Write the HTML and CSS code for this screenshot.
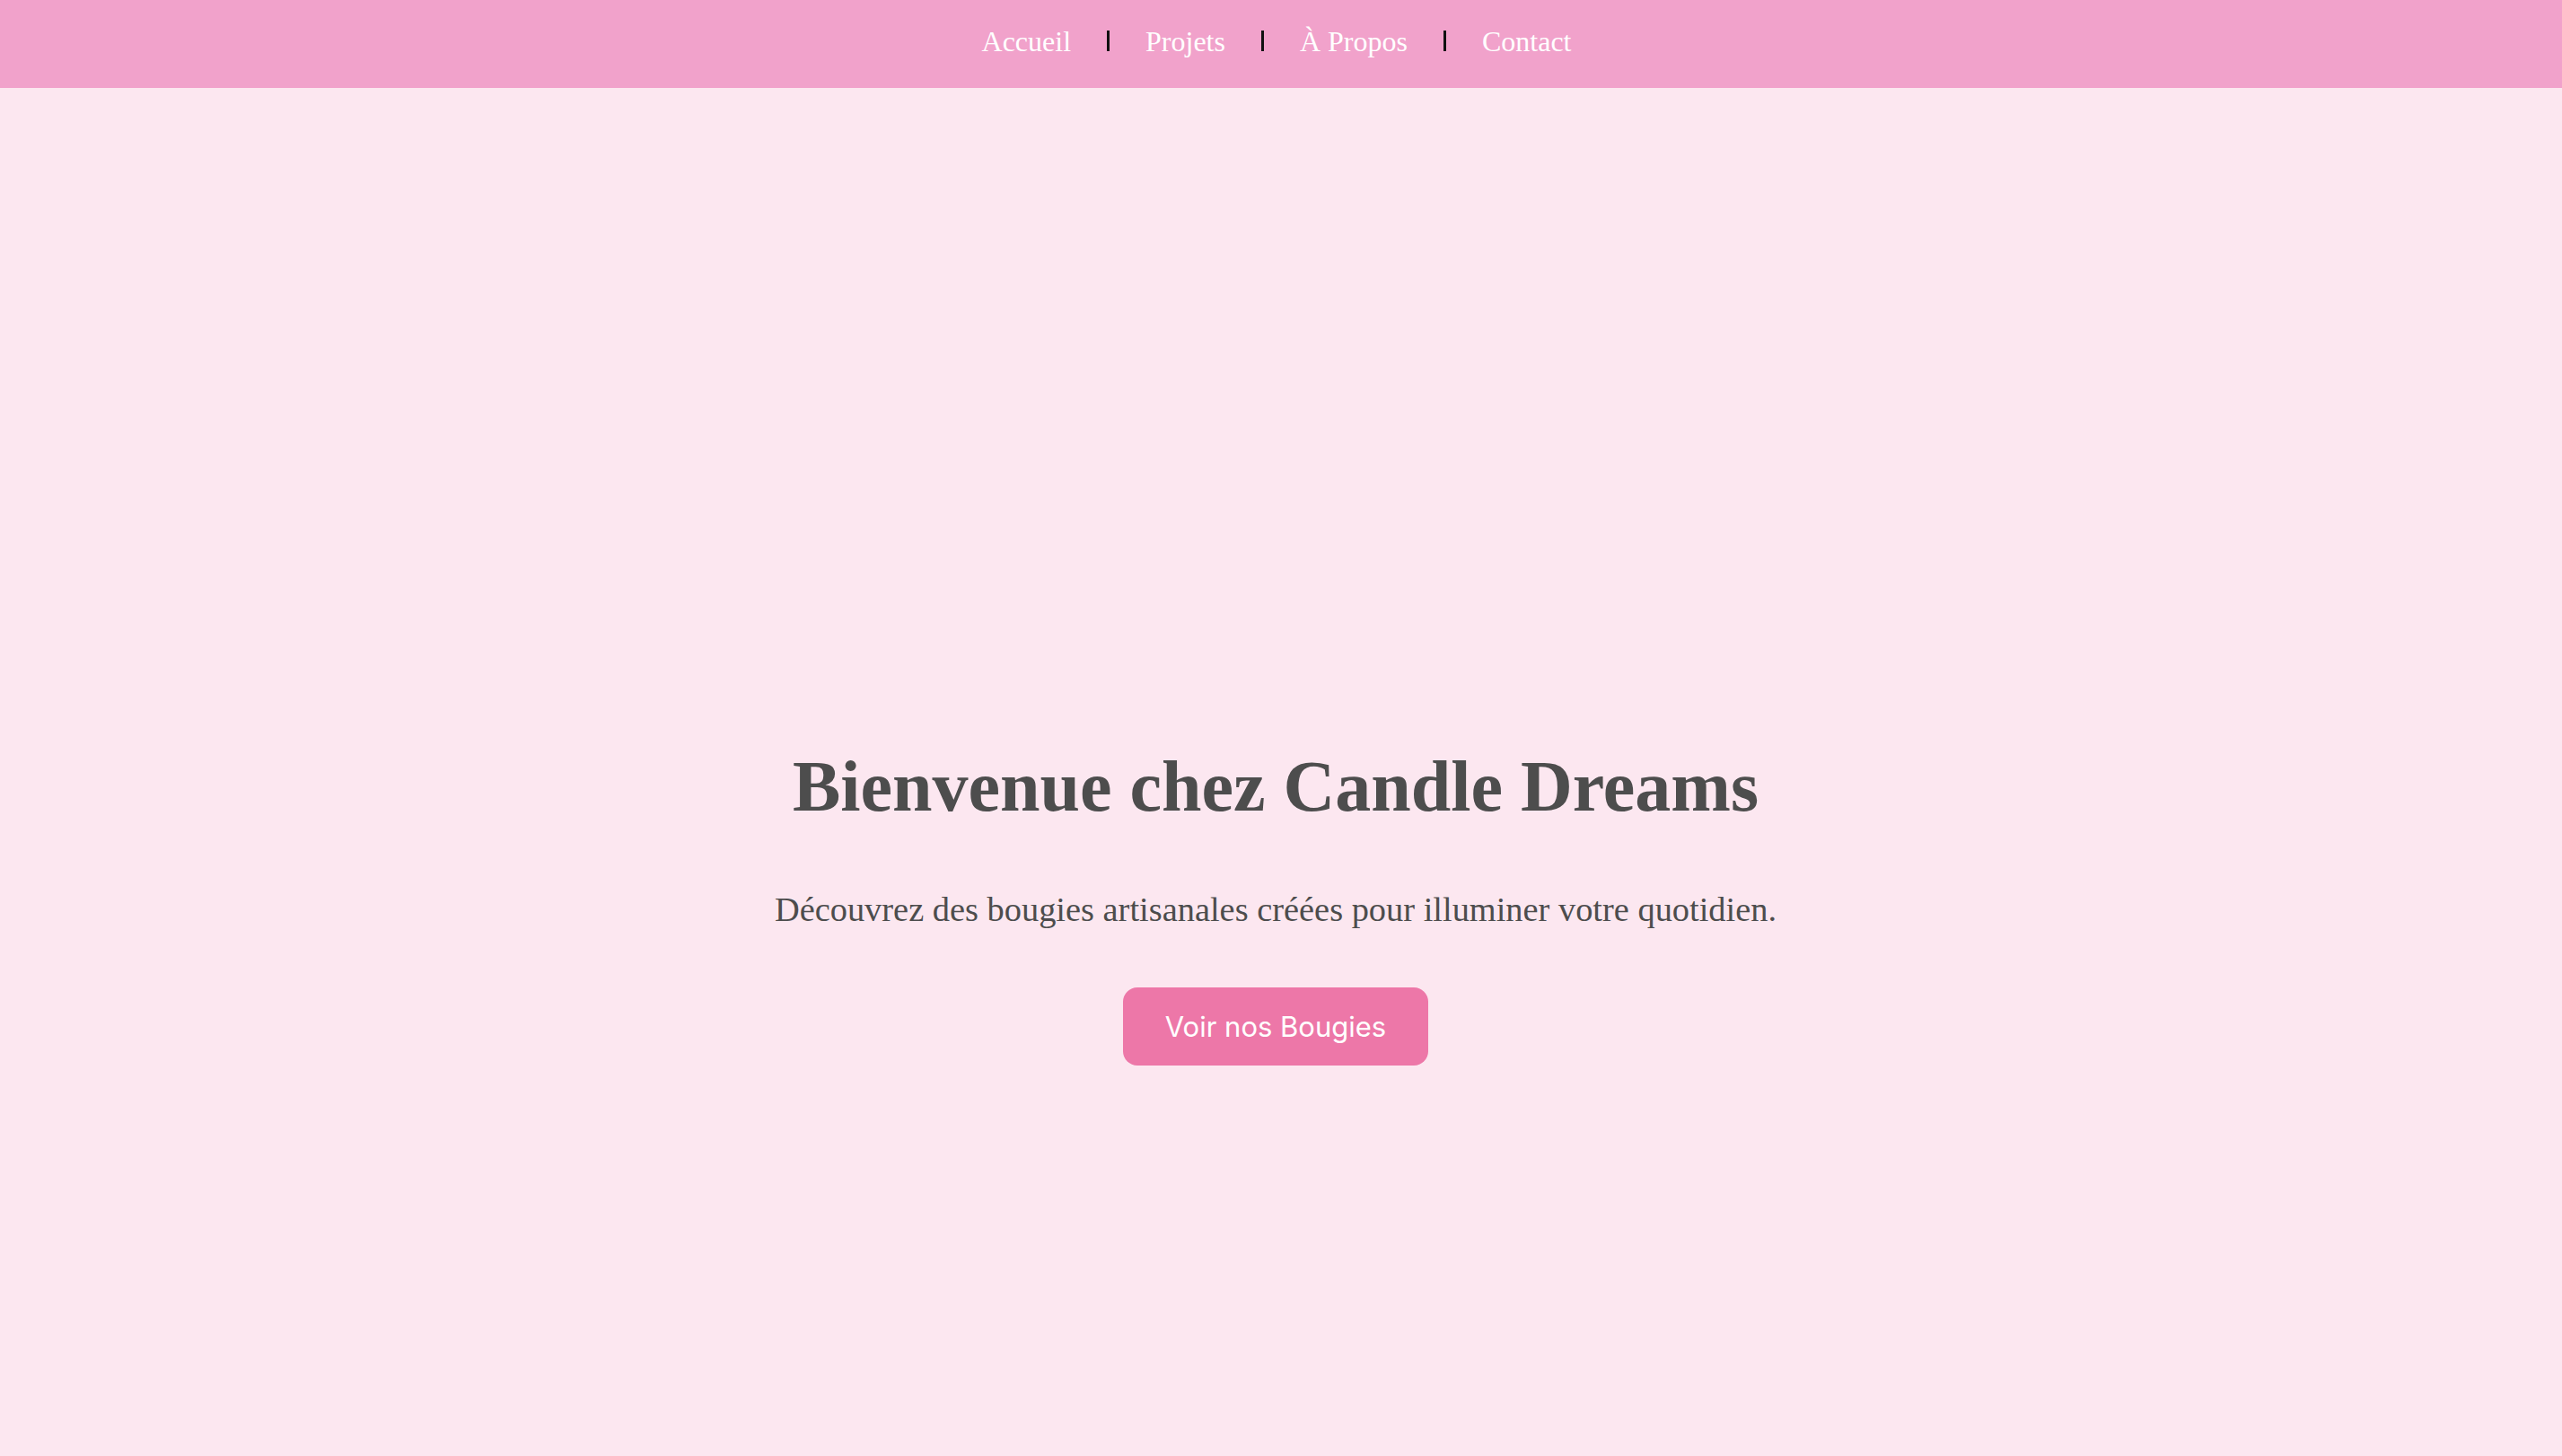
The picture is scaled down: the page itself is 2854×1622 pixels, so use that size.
FILE: index.html
```html
<!DOCTYPE html>
<html lang="fr">
<head>
<meta charset="utf-8">
<title>Candle Dreams</title>
<link rel="stylesheet" href="styles.css">
</head>
<body>
<nav class="topnav">
  <ul class="menu">
    <li class="menu-item"><a href="#">Accueil</a></li>
    <li class="sep" aria-hidden="true"></li>
    <li class="menu-item"><a href="#">Projets</a></li>
    <li class="sep" aria-hidden="true"></li>
    <li class="menu-item"><a href="#">À Propos</a></li>
    <li class="sep" aria-hidden="true"></li>
    <li class="menu-item"><a href="#">Contact</a></li>
  </ul>
</nav>
<main class="hero">
  <h1 class="hero-title">Bienvenue chez Candle Dreams</h1>
  <p class="hero-text">Découvrez des bougies artisanales créées pour illuminer votre quotidien.</p>
  <a class="hero-btn" href="#">Voir nos Bougies</a>
</main>
</body>
</html>
```

FILE: styles.css
```css
html, body {
  margin: 0;
  padding: 0;
}
body {
  background: #fce7f0;
  font-family: "Liberation Serif", "Times New Roman", serif;
  min-height: 100vh;
}
.topnav {
  background: #f1a2cb;
  height: 98px;
  display: flex;
  align-items: center;
  justify-content: center;
  padding-right: 10px;
  box-sizing: border-box;
}
.menu {
  list-style: none;
  margin: -6px 0 0;
  padding: 0;
  display: flex;
  align-items: center;
  gap: 40px;
}
.menu-item a {
  color: #ffffff;
  text-decoration: none;
  font-size: 32px;
  line-height: 1;
  display: block;
}
.sep {
  width: 3px;
  height: 23px;
  background: #111;
  margin-top: -2px;
}
.hero {
  display: flex;
  flex-direction: column;
  align-items: center;
  margin-top: 732px;
  padding-right: 12px;
}
.hero-title {
  margin: 0;
  font-size: 80px;
  font-weight: bold;
  color: #4d4d4d;
  line-height: 92px;
}
.hero-text {
  margin: 69px 0 0;
  font-size: 38.4px;
  color: #4d4d4d;
  line-height: 44px;
}
.hero-btn {
  margin-top: 65px;
  display: inline-block;
  background: #ed77a8;
  color: #ffffff;
  text-decoration: none;
  font-family: Inter, "Liberation Sans", sans-serif;
  font-size: 31px;
  line-height: 39px;
  padding: 24px 47px;
  border-radius: 16px;
}
```
